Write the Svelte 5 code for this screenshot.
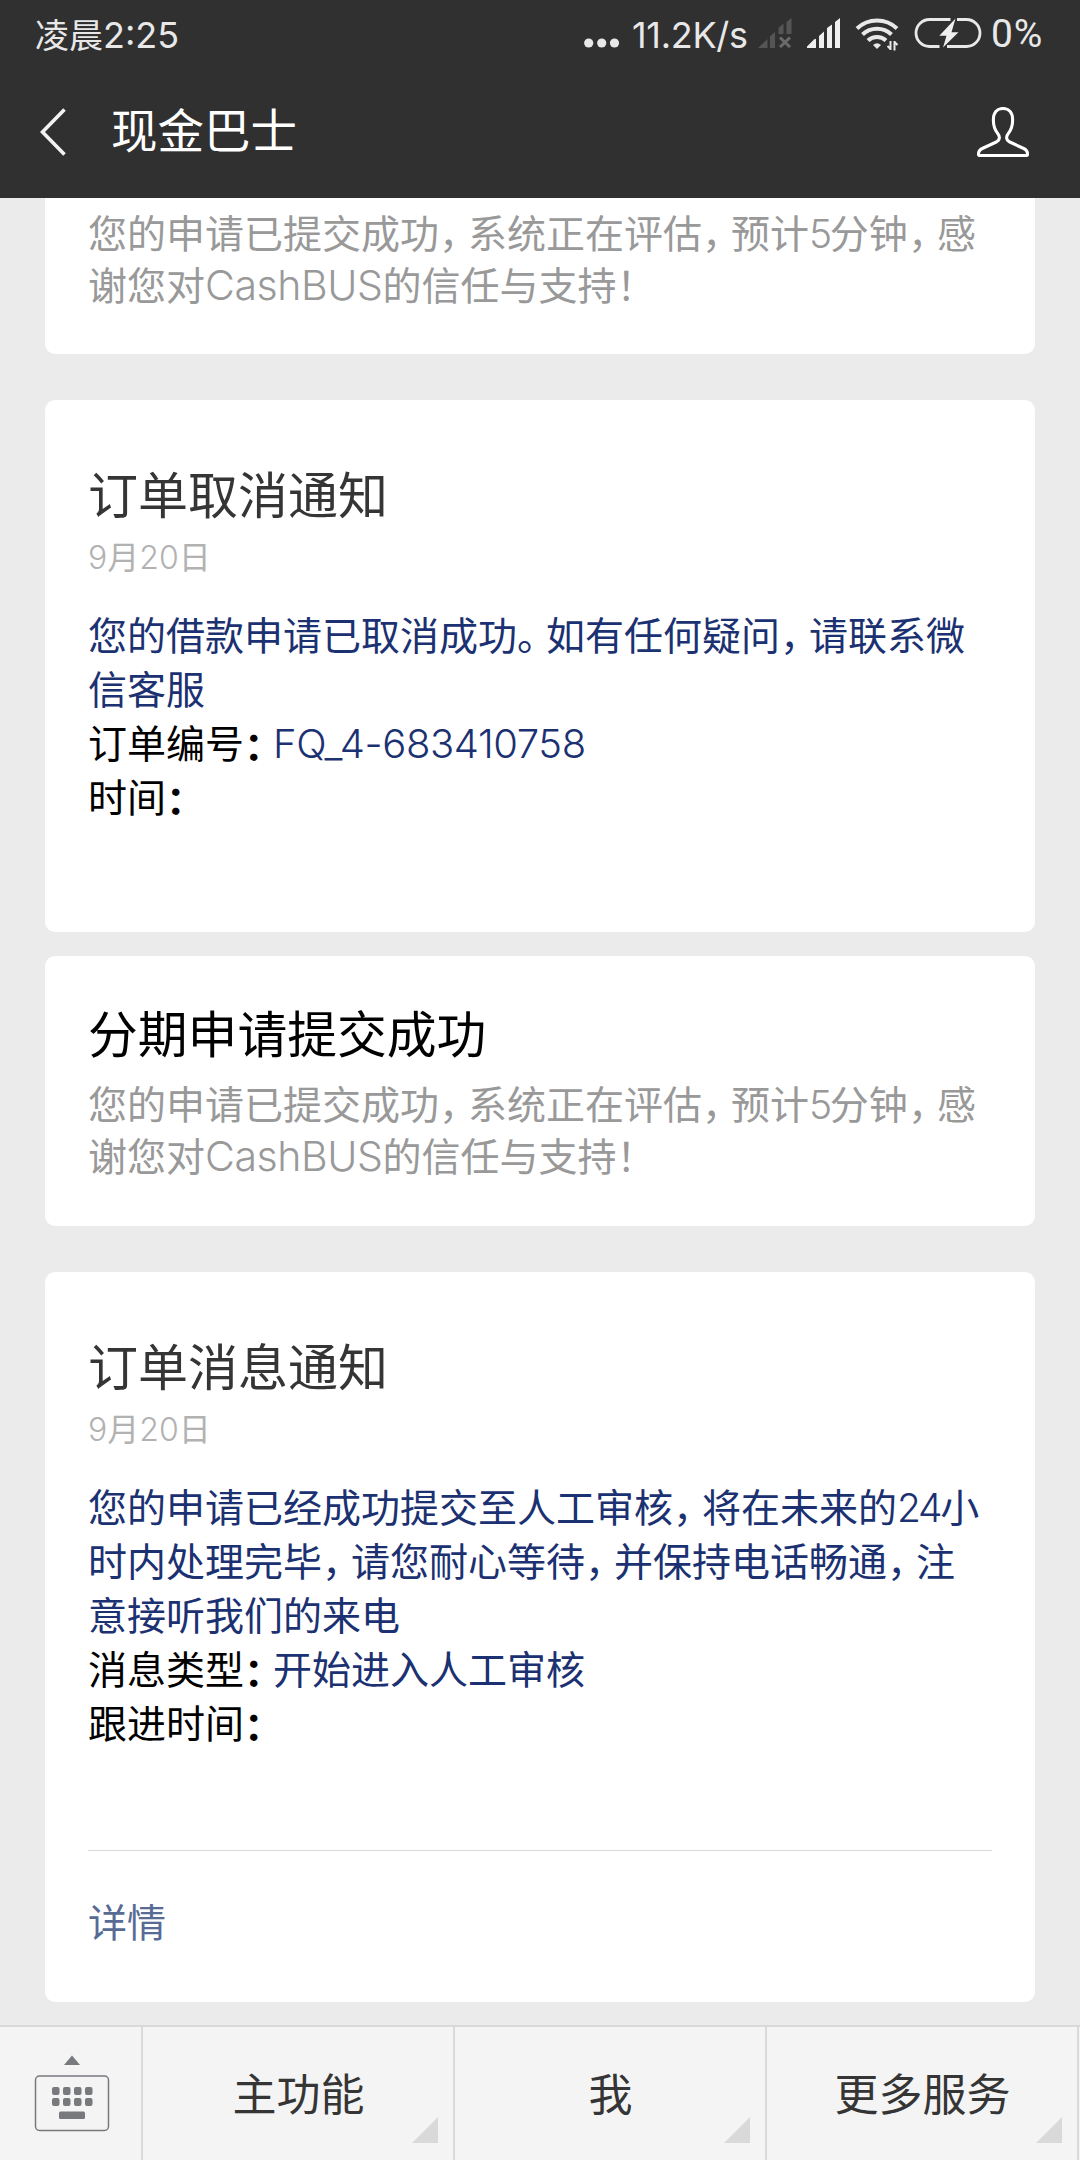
<script lang="ts">
	type Row = { label?: string; value?: string };

	const notice = ["您的申请已提交成功，系统正在评估，预计5分钟，感", "谢您对CashBUS的信任与支持！"];

	const cancelRows: Row[] = [
		{ value: "您的借款申请已取消成功。如有任何疑问，请联系微" },
		{ value: "信客服" },
		{ label: "订单编号：", value: "FQ_4-683410758" },
		{ label: "时间：" }
	];

	const reviewRows: Row[] = [
		{ value: "您的申请已经成功提交至人工审核，将在未来的24小" },
		{ value: "时内处理完毕，请您耐心等待，并保持电话畅通，注" },
		{ value: "意接听我们的来电" },
		{ label: "消息类型：", value: "开始进入人工审核" },
		{ label: "跟进时间：" }
	];

	const menu = ["主功能", "我", "更多服务"];

	// Splits a line into runs so punctuation and latin text get their own spacing.
	function runs(text: string): { text: string; kind: string }[] {
		const parts = text.match(/[，。：！]|[\x21-\x7e]+|[^，。：！\x21-\x7e]+/g) ?? [];
		return parts.map((part) => ({ text: part, kind: kindOf(part) }));
	}

	function kindOf(part: string): string {
		if (part === "：") return "punct colon";
		if (/^[，。！]$/.test(part)) return "punct";
		if (/^[0-9]+$/.test(part)) return "num";
		if (/^[A-Za-z]+$/.test(part)) return "latin";
		if (/^[\x21-\x7e]/.test(part)) return "code";
		return "han";
	}
</script>

{#snippet line(text: string)}
	{#each runs(text) as run}<span class={run.kind}>{run.text}</span>{/each}
{/snippet}

{#snippet rowList(rows: Row[])}
	<div class="rows">
		{#each rows as row}
			<p class="row">
				{#if row.label}<span class="row-label">{@render line(row.label)}</span>{/if}{#if row.value}<span class="row-value">{@render line(row.value)}</span>{/if}
			</p>
		{/each}
	</div>
{/snippet}

{#snippet noticeText()}
	<div class="notice">
		{#each notice as text}
			<p>{@render line(text)}</p>
		{/each}
	</div>
{/snippet}

<div class="screen">
	<header>
		<div class="status">
			<span class="clock">凌晨<span class="clock-num">2:25</span></span>
			<svg class="dots" width="38" height="12" viewBox="0 0 38 12" fill="#e8e8e8">
				<circle cx="4.700" cy="6" r="4.600" /><circle cx="17.700" cy="6" r="4.600" /><circle cx="30.500" cy="6" r="4.600" />
			</svg>
			<span class="speed">11.2K/s</span>
			<svg class="sim-off" width="34" height="30" viewBox="0 0 34 30">
				<path fill="#555" d="M0 30 9.500 21V30ZM12 18.500 17 14V30H12ZM20.500 10 25.500 5.500V16H20.500ZM28.500 4 33.500 0V16H28.500Z" />
				<path stroke="#6a6a6a" stroke-width="3" d="M22 19.500 32 29M32 19.500 22 29" />
			</svg>
			<svg class="sim-on" width="34" height="30" viewBox="0 0 34 30" fill="#efefef">
				<path d="M0 30V28.500L7 21.500Q9 20 9 22V30ZM12 18 17 13.500V30H12ZM20 12V10L25 6.500V30H20ZM28 4 33 0V30H28Z" />
			</svg>
			<svg class="wifi" width="44" height="34" viewBox="0 0 44 34" fill="none" stroke="#e8e8e8" stroke-width="4">
				<path d="M2 11.500a29 29 0 0 1 40 0M7.500 17.500a21 21 0 0 1 29 0M13 23.500a13 13 0 0 1 18 0" />
				<path fill="#e8e8e8" stroke="none" d="M18 28q4-3.500 8 0L22 32Z" />
				<path stroke-width="2" d="M35.500 33V24M35.500 32 32.500 29M39.500 24V33.500M39.500 25 42.500 28" />
			</svg>
			<svg class="battery" width="69" height="32" viewBox="0 0 69 32">
				<path fill="none" stroke="#e8e8e8" stroke-width="2.800" d="M36.500 2.500H15.500a13.500 13.500 0 0 0 0 27H25.500M43 2.500h9.500a13.500 13.500 0 0 1 0 27H33" />
				<path fill="#efefef" d="M41.500 1.500 25.300 18.800h7.200L29 30.500 44.500 15.300H37.500Z" />
			</svg>
			<span class="percent">0%</span>
		</div>
		<div class="titlebar">
			<svg class="back" width="26" height="48" viewBox="0 0 26 48" fill="none" stroke="#f2f2f2" stroke-width="3.600">
				<path d="M24.500 1.500 2.500 24 24.500 46.500" />
			</svg>
			<h1>现金巴士</h1>
			<svg class="person" width="52" height="50" viewBox="0 0 54 50" preserveAspectRatio="none" fill="none" stroke="#fff" stroke-width="3.200">
				<path d="M27 1.500C20.500 1.500 17 6 17 13C17 19 18.500 23 21.500 26.500C24 29.500 24 33 20 35L5.500 41.500C2 43 1.500 45 1.500 47.500Q1.500 48.500 3 48.500H51Q52.500 48.500 52.500 47.500C52.500 45 52 43 48.500 41.500L34 35C30 33 30 29.500 32.500 26.500C35.500 23 37 19 37 13C37 6 33.500 1.500 27 1.500Z" />
			</svg>
		</div>
	</header>

	<main>
		<section class="card card-cut">
			{@render noticeText()}
		</section>

		<section class="card card-cancel">
			<h2>订单取消通知</h2>
			<time><span class="num">9</span>月<span class="num">20</span>日</time>
			{@render rowList(cancelRows)}
		</section>

		<section class="card card-submit">
			<h2 class="strong">分期申请提交成功</h2>
			{@render noticeText()}
		</section>

		<section class="card card-review">
			<h2>订单消息通知</h2>
			<time><span class="num">9</span>月<span class="num">20</span>日</time>
			{@render rowList(reviewRows)}
			<div class="detail">详情</div>
		</section>
	</main>

	<footer>
		<div class="keyboard">
			<svg width="76" height="80" viewBox="0 0 76 80" fill="#77797d">
				<path d="M38 0.500 46 10H30Z" />
				<rect x="1.500" y="21" width="73" height="54.500" rx="4" fill="none" stroke="#77797d" stroke-width="1.500" />
				{#each [0, 1, 2, 3] as col}
					<rect x={18 + col * 11} y="32" width="7.500" height="8" rx="2" />
					<rect x={18 + col * 11} y="43" width="7.500" height="8" rx="2" />
				{/each}
				<rect x="25" y="56.500" width="26" height="7.500" rx="1.500" />
			</svg>
		</div>
		{#each menu as item}
			<div class="menu-item">
				{item}
				<svg class="corner" width="26" height="26" viewBox="0 0 26 26"><path d="M26 0V26H0Z" fill="#d9d9d9" /></svg>
			</div>
		{/each}
	</footer>
</div>

<style>
	:global(body) {
		background: #ebebeb;
	}

	h1,
	h2,
	p {
		margin: 0;
		font-weight: 400;
	}

	svg {
		display: block;
		flex-shrink: 0;
	}

	.screen {
		display: flex;
		flex-direction: column;
		width: 1080px;
		height: 2160px;
		overflow: hidden;
		background: #ebebeb;
		font-family: "Noto Sans CJK SC", sans-serif;
		font-weight: 400;
		white-space: nowrap;
	}

	header {
		height: 198px;
		flex-shrink: 0;
		background: #303030;
		color: #e8e8e8;
	}

	.status {
		display: flex;
		align-items: center;
		height: 66px;
		padding-left: 35px;
	}

	.clock {
		width: 549px;
		font-size: 34px;
	}

	.clock-num,
	.speed {
		font-family: Inter, sans-serif;
		font-size: 36px;
	}

	.speed {
		width: 126px;
		margin: 3px 0 0 10px;
		letter-spacing: -0.3px;
	}

	.dots {
		margin-top: 20px;
	}

	.sim-on {
		margin-left: 15px;
	}

	.wifi {
		margin: 2px 15px 0 14px;
	}

	.percent {
		margin: 2px 0 0 8px;
		font-family: Roboto, sans-serif;
		font-size: 39px;
		letter-spacing: 0.8px;
	}

	.titlebar {
		display: flex;
		align-items: center;
		height: 132px;
		padding: 0 51px 0 40px;
	}

	h1 {
		flex: 1;
		margin: -8px 0 0 45px;
		font-size: 46.500px;
		line-height: 60px;
		color: #fff;
	}

	main {
		flex: 1;
		min-height: 0;
		padding: 0 45px;
	}

	.card {
		box-sizing: border-box;
		padding: 0 43px;
		border-radius: 10px;
		background: #fff;
		overflow: hidden;
	}

	.card-cut {
		height: 156px;
		padding-top: 7px;
		border-radius: 0 0 10px 10px;
	}

	.card-cancel {
		height: 532px;
		margin-top: 46px;
		padding-top: 57px;
	}

	.card-submit {
		height: 270px;
		margin-top: 24px;
		padding-top: 40px;
	}

	.card-review {
		height: 730px;
		margin-top: 46px;
		padding-top: 57px;
	}

	h2 {
		font-size: 50px;
		line-height: 70px;
		color: #353535;
	}

	h2.strong {
		font-size: 49.800px;
		color: #000;
	}

	time {
		display: block;
		height: 54px;
		font-size: 32px;
		line-height: 56px;
		color: #b2b2b2;
	}

	.notice {
		font-size: 39px;
		line-height: 52px;
		color: #999;
	}

	.card-submit .notice {
		margin-top: 10px;
	}

	.notice p {
		height: 52px;
	}

	.rows {
		margin-top: 25px;
		font-size: 39px;
		line-height: 54px;
	}

	.row {
		height: 54px;
	}

	.row-label {
		color: #000;
	}

	.row-value {
		color: #1b3172;
	}

	.punct {
		display: inline-block;
		width: 29px;
		font-feature-settings: "halt";
	}

	.colon {
		font-weight: 700;
		transform: translateY(2px);
	}

	.num,
	.latin,
	.code {
		font-family: Inter, sans-serif;
		font-weight: 350;
		line-height: 1;
	}

	.num {
		letter-spacing: -0.06em;
	}

	time .num {
		font-weight: 300;
		letter-spacing: 0;
	}

	.latin {
		font-size: 41px;
		letter-spacing: -0.01em;
	}

	.code {
		font-size: 40px;
		letter-spacing: -0.01em;
	}

	.detail {
		margin-top: 102px;
		padding-top: 42px;
		border-top: 1px solid #d9d9d9;
		font-size: 39px;
		line-height: 54px;
		color: #576b95;
	}

	footer {
		display: flex;
		height: 133px;
		flex-shrink: 0;
		border-top: 2px solid #d9d9d9;
		background: #f4f4f4;
	}

	.keyboard {
		width: 143px;
		box-sizing: border-box;
		padding: 28px 0 0 34px;
		border-right: 2px solid #d9d9d9;
	}

	.menu-item {
		position: relative;
		width: 312px;
		box-sizing: border-box;
		border-right: 2px solid #d9d9d9;
		padding-left: 1px;
		font-size: 44px;
		line-height: 130px;
		text-align: center;
		color: #353535;
	}

	.corner {
		position: absolute;
		right: 15px;
		bottom: 17px;
	}
</style>
